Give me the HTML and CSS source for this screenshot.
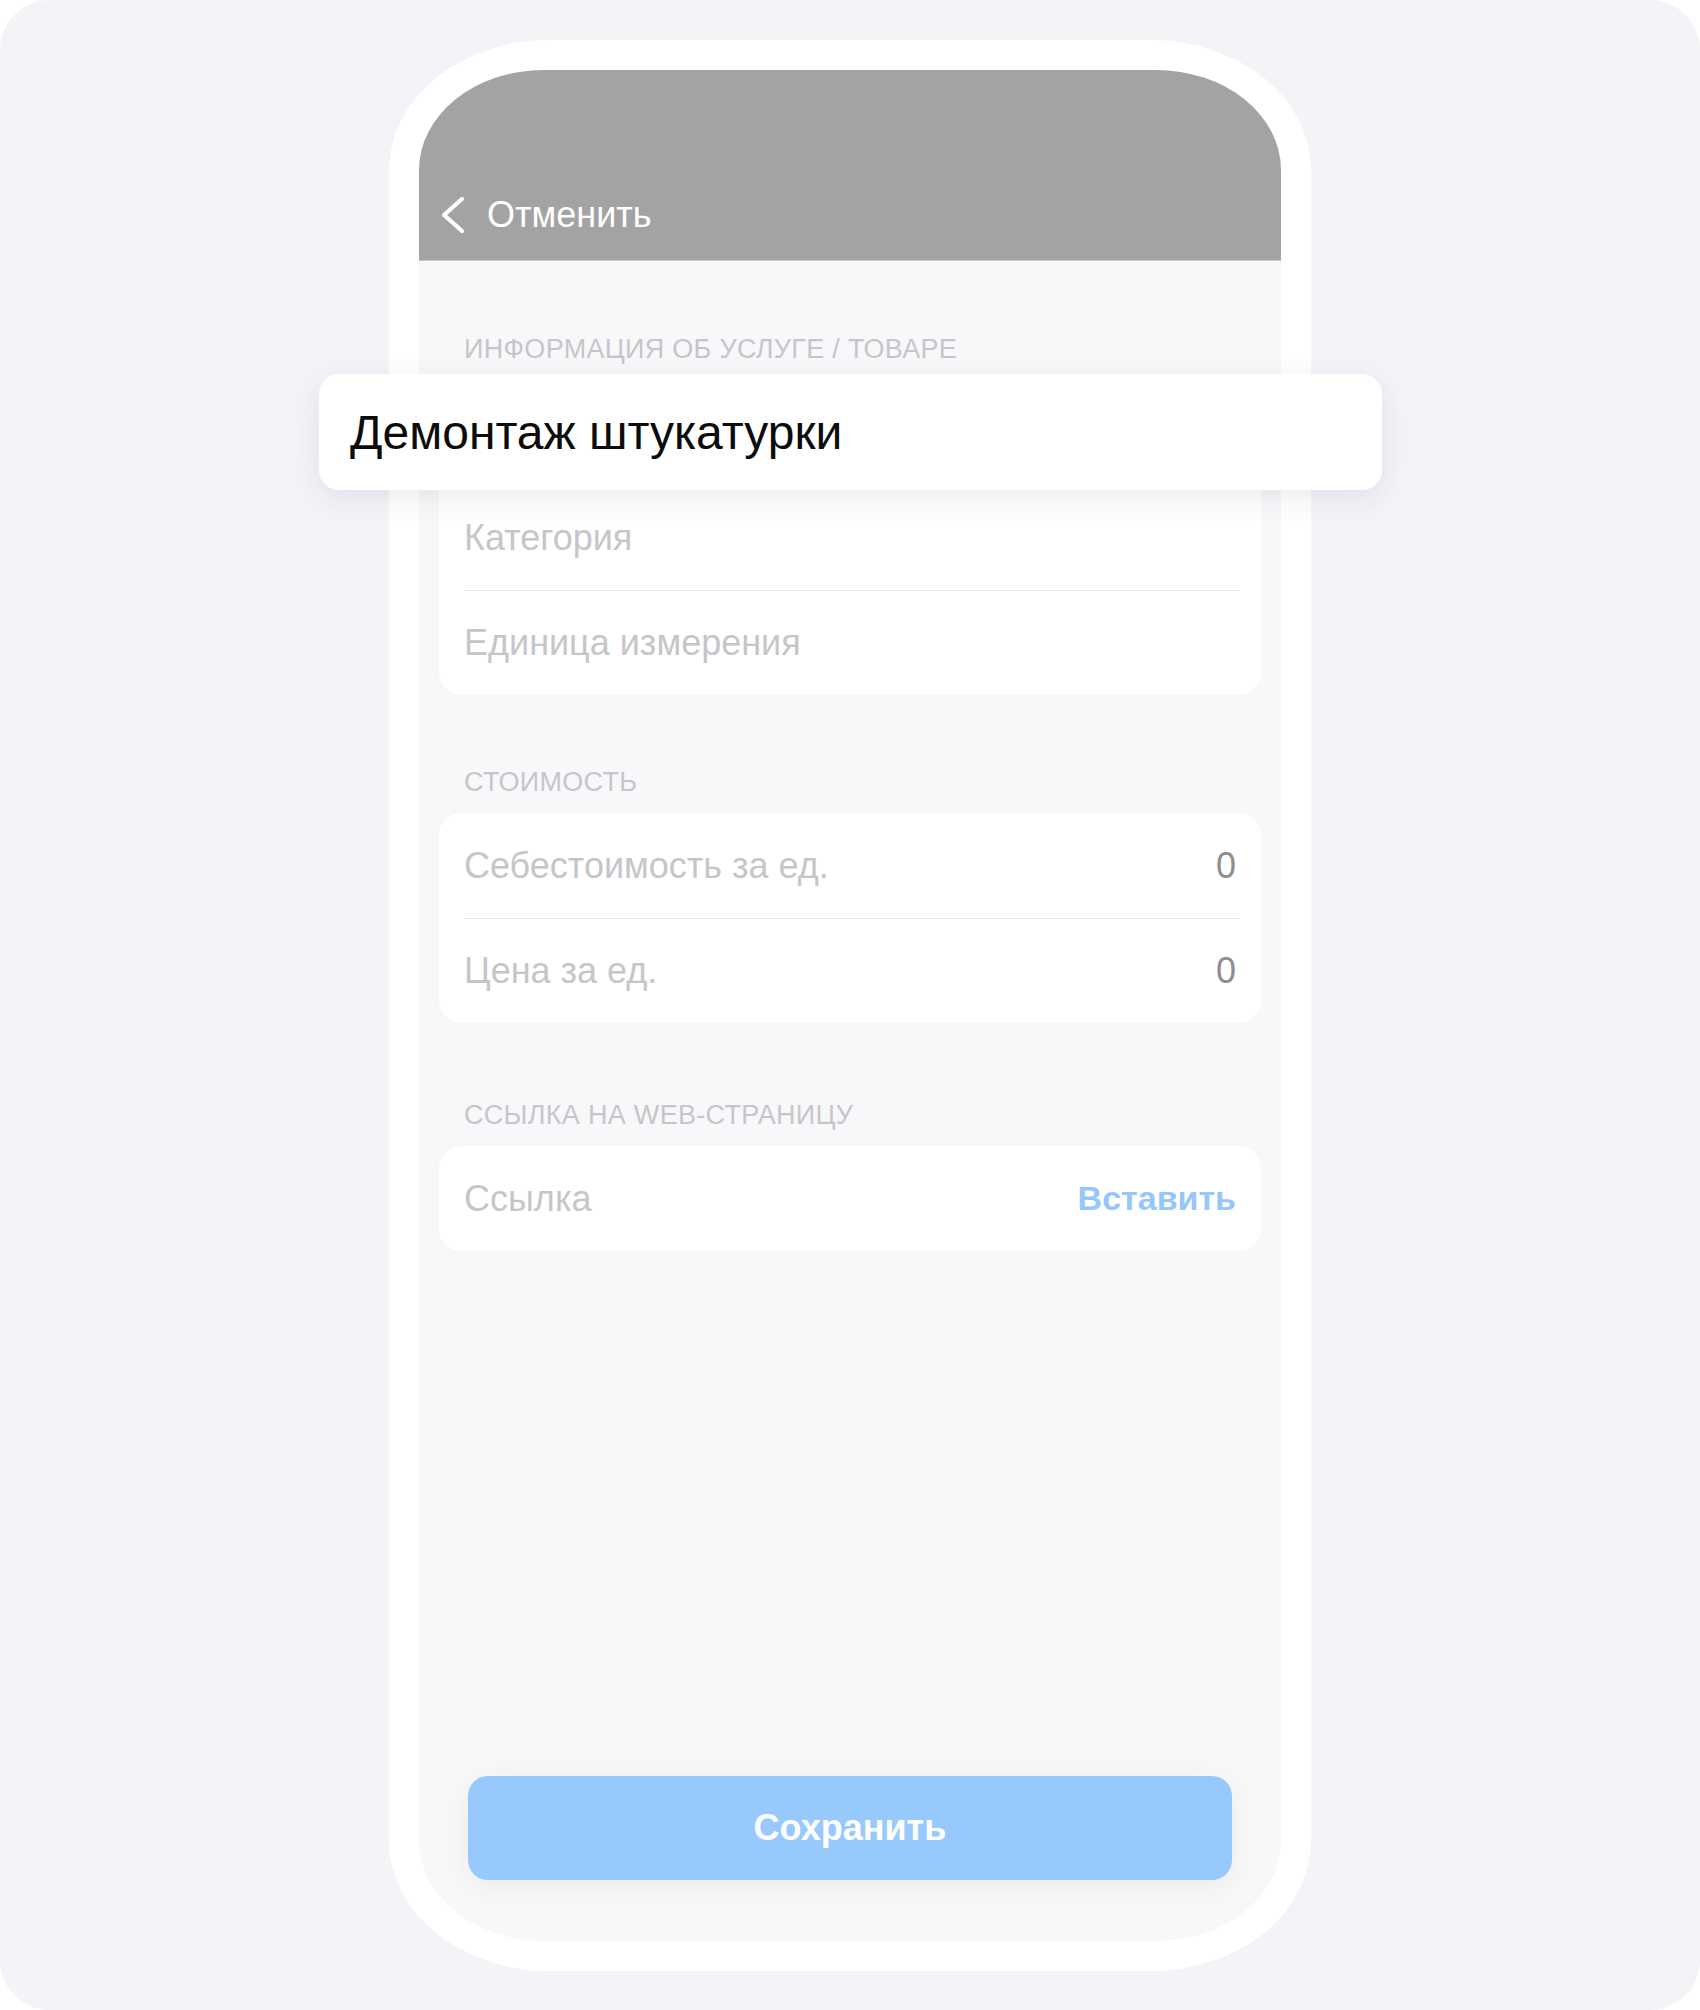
FILE: index.html
```html
<!DOCTYPE html>
<html lang="ru">
<head>
    <meta charset="UTF-8">
    <meta name="viewport" content="width=device-width, initial-scale=1.0">
    <title>Новая услуга</title>
    <link rel="stylesheet" href="styles.css">
</head>
<body>
    <div class="canvas">
        <div class="phone">
            <div class="screen">
                <header class="nav">
                    <a class="back" href="#">
                        <svg class="back-icon" width="26" height="40" viewBox="0 0 26 40">
                            <polyline points="22,4 4,20 22,36" fill="none" stroke="#fff" stroke-width="4.2" stroke-linecap="round" stroke-linejoin="round"/>
                        </svg>
                        <span>Отменить</span>
                    </a>
                </header>

                <main class="form">
                    <section class="group">
                        <h2 class="group-title">Информация об услуге / товаре</h2>
                        <div class="card">
                            <div class="row row-name">
                                <div class="name-focus">Демонтаж штукатурки</div>
                            </div>
                            <div class="row"><span class="placeholder">Категория</span></div>
                            <div class="row"><span class="placeholder">Единица измерения</span></div>
                        </div>
                    </section>

                    <section class="group">
                        <h2 class="group-title">Стоимость</h2>
                        <div class="card">
                            <div class="row">
                                <span class="placeholder">Себестоимость за ед.</span>
                                <span class="value">0</span>
                            </div>
                            <div class="row">
                                <span class="placeholder">Цена за ед.</span>
                                <span class="value">0</span>
                            </div>
                        </div>
                    </section>

                    <section class="group group-link">
                        <h2 class="group-title">Ссылка на web-страницу</h2>
                        <div class="card">
                            <div class="row">
                                <span class="placeholder">Ссылка</span>
                                <a class="paste" href="#">Вставить</a>
                            </div>
                        </div>
                    </section>
                </main>

                <div class="footer">
                    <button class="save">Сохранить</button>
                </div>
            </div>
        </div>
    </div>
</body>
</html>
```

FILE: styles.css
```css
body {
    margin: 0;
    background-color: #fff;
    font-family: "Liberation Sans", Arial, sans-serif;
}

.canvas {
    width: 1700px;
    height: 2010px;
    background-color: #f3f4f8;
    border-radius: 50px;
    display: flex;
    justify-content: center;
    padding-top: 40px;
    box-sizing: border-box;
}

/* рамка телефона */
.phone {
    width: 922px;
    height: 1931px;
    padding: 30px;
    box-sizing: border-box;
    background-color: #fff;
    border-radius: 160px / 130px;
}

.screen {
    height: 100%;
    background-color: #f8f8fa;
    border-radius: 125px / 100px;
    display: flex;
    flex-direction: column;
}

/* шапка */
.nav {
    height: 191px;
    box-sizing: border-box;
    background-color: #a3a3a3;
    border-bottom: 1px solid #c9c9cb;
    border-radius: 125px 125px 0 0 / 100px 100px 0 0;
    display: flex;
    align-items: flex-end;
    padding: 0 0 25px 21px;
}

.back {
    display: flex;
    align-items: center;
    gap: 21px;
    color: #fff;
    text-decoration: none;
    font-size: 36px;
    line-height: 40px;
}

.back-icon {
    display: block;
}

/* форма */
.form {
    padding: 72px 20px 0 20px;
}

.group + .group {
    margin-top: 71px;
}

.group.group-link {
    margin-top: 76px;
}

.group-title {
    margin: 0 0 15px 25px;
    font-size: 27px;
    line-height: 32px;
    letter-spacing: 0.3px;
    font-weight: normal;
    text-transform: uppercase;
    color: #c6c6ca;
}

.card {
    background-color: #fff;
    border-radius: 22px;
    box-shadow: 0 0 10px rgba(0, 0, 0, 0.015);
}

.row {
    height: 105px;
    box-sizing: border-box;
    margin: 0 21px 0 25px;
    display: flex;
    align-items: center;
    justify-content: space-between;
    font-size: 36px;
}

.row + .row {
    border-top: 1.5px solid #e7e7ea;
}

.placeholder {
    color: #c6c6c8;
}

.value {
    color: #8e8e92;
    padding-right: 4px;
}

.paste {
    color: #95c7fb;
    font-weight: bold;
    font-size: 34px;
    text-decoration: none;
    padding-right: 4px;
}

/* поле в фокусе поверх карточки */
.row-name {
    position: relative;
}

.name-focus {
    position: absolute;
    top: -6px;
    left: -145px;
    right: -142px;
    height: 116px;
    box-sizing: border-box;
    padding-left: 31px;
    display: flex;
    align-items: center;
    background-color: #fff;
    border-radius: 20px;
    box-shadow: 0 8px 30px rgba(30, 40, 70, 0.09);
    font-size: 48px;
    color: #0c0c0c;
}

/* кнопка */
.footer {
    margin-top: auto;
    padding: 0 0 61px 0;
    display: flex;
    justify-content: center;
}

.save {
    width: 764px;
    height: 104px;
    border: none;
    border-radius: 20px;
    background-color: #98c9fc;
    color: #fff;
    font-family: "Liberation Sans", Arial, sans-serif;
    font-size: 36px;
    font-weight: bold;
    box-shadow: 0 6px 30px rgba(0, 0, 0, 0.06);
    cursor: pointer;
}
```
